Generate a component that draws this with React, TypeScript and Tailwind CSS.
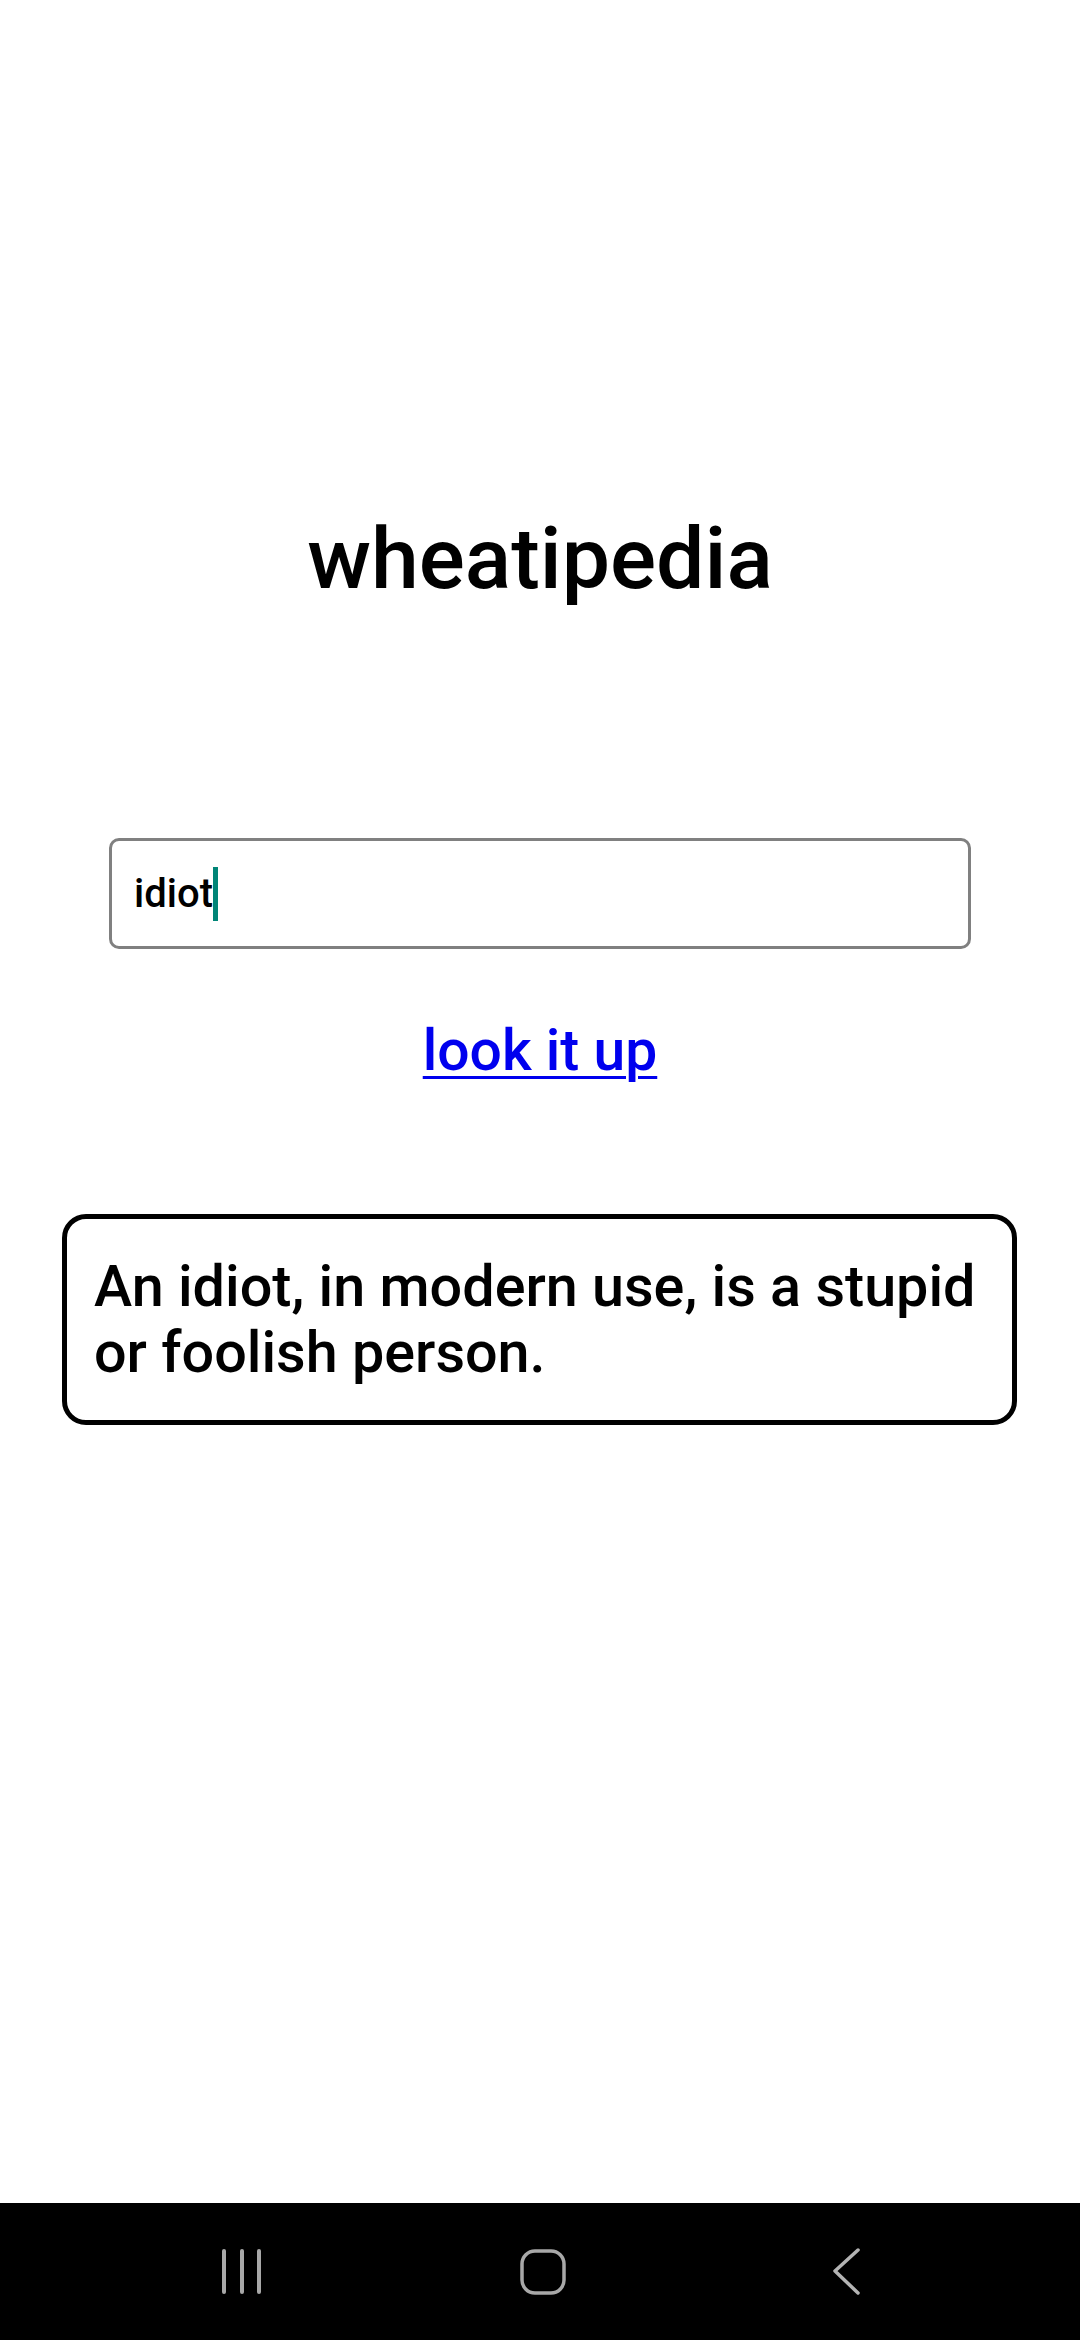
export default function App() {
  return (
    <div className="flex h-[2340px] w-[1080px] flex-col bg-white font-['Roboto',sans-serif]">
      {/* Page content */}
      <main className="flex flex-1 flex-col items-center">
        <h1 className="mt-[509px] text-[86px] leading-[100px] font-medium text-black">wheatipedia</h1>

        <div className="mt-[229px] flex h-[111px] w-[862px] items-center rounded-[10px] border-[3px] border-[#808080] px-[22px]">
          <span className="text-[40px] font-medium text-black">idiot</span>
          <span className="h-[54px] w-[5px] bg-[#008577]" />
        </div>

        <a href="#" className="mt-[67px] text-[57px] leading-[70px] font-medium text-[#0000ee] underline decoration-[3px] underline-offset-[6px]">
          look it up
        </a>

        <div className="mt-[128px] ml-[62px] w-[955px] self-start rounded-[24px] border-[5px] border-black pt-[35px] pb-[34px] pl-[27px] pr-[14px]">
          <p className="text-[57.5px] leading-[66px] font-medium text-black">
            An idiot, in modern use, is a stupid or foolish person.
          </p>
        </div>
      </main>

      {/* Navigation bar */}
      <nav className="flex h-[137px] items-center bg-black pl-[212px]">
        <div className="flex w-[60px] justify-center">
          <svg width="48" height="48" viewBox="0 0 48 48" fill="none" stroke="#a8a8a8" strokeWidth="4" strokeLinecap="round">
            <line x1="6" y1="3" x2="6" y2="44" />
            <line x1="24" y1="3" x2="24" y2="44" />
            <line x1="41" y1="3" x2="41" y2="44" />
          </svg>
        </div>
        <div className="ml-[241px] flex w-[60px] justify-center">
          <svg width="48" height="48" viewBox="0 0 48 48" fill="none" stroke="#a8a8a8" strokeWidth="3.5">
            <rect x="3" y="3" width="42" height="42" rx="13" />
          </svg>
        </div>
        <div className="ml-[244px] flex w-[60px] justify-center">
          <svg width="30" height="48" viewBox="0 0 30 48" fill="none" stroke="#b4b4b4" strokeWidth="3.5" strokeLinecap="round" strokeLinejoin="round">
            <polyline points="26,2 3,23 26,45" />
          </svg>
        </div>
      </nav>
    </div>
  );
}
